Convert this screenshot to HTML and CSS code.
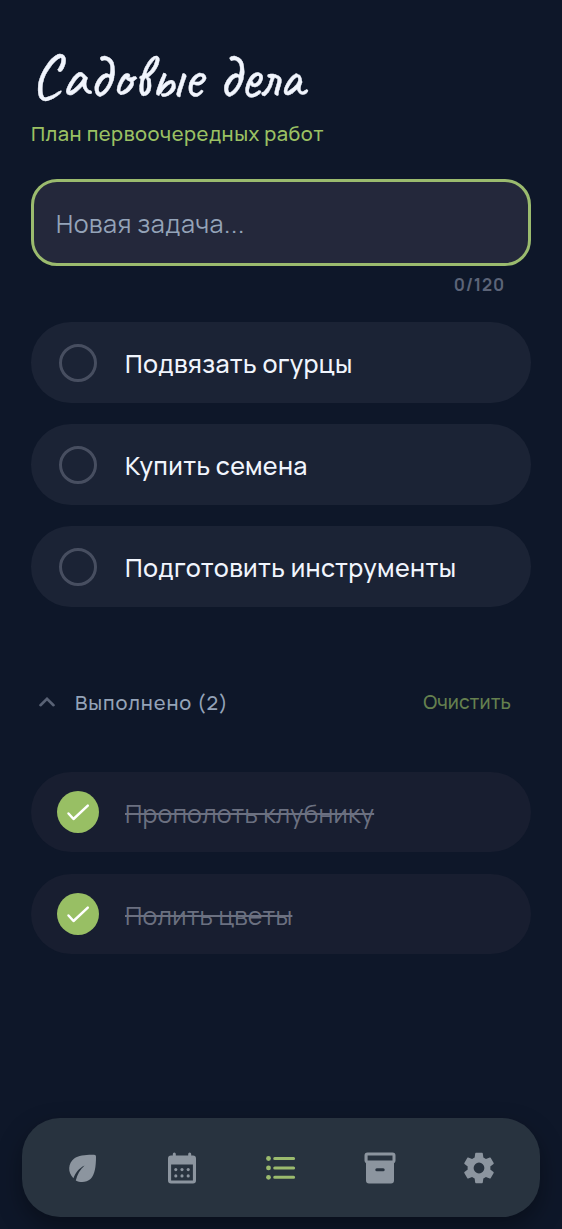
FILE: index.html
```html
<!DOCTYPE html>
<html lang="ru">
<head>
<meta charset="utf-8">
<meta name="viewport" content="width=device-width, initial-scale=1">
<title>Садовые дела</title>
<link rel="stylesheet" href="styles.css">
</head>
<body>
<div class="app">
  <main class="content">
    <h1 class="title">Садовые дела</h1>
    <p class="subtitle">План первоочередных работ</p>
    <div class="field"><span class="placeholder">Новая задача...</span></div>
    <div class="counter">0/120</div>
    <ul class="tasks">
      <li class="task"><span class="check"></span><span class="label">Подвязать огурцы</span></li>
      <li class="task"><span class="check"></span><span class="label">Купить семена</span></li>
      <li class="task"><span class="check"></span><span class="label">Подготовить инструменты</span></li>
    </ul>
    <div class="section">
      <svg class="chevron" viewBox="0 0 16 10"><path d="M1.500 8.200 8 1.800l6.500 6.400"/></svg>
      <span class="section-title">Выполнено (2)</span>
      <span class="clear">Очистить</span>
    </div>
    <ul class="tasks done">
      <li class="task"><span class="check checked"><svg viewBox="0 0 42 42"><path d="m11.500 22.500 5 5.500 14.300-13.300"/></svg></span><span class="label">Прополоть клубнику</span></li>
      <li class="task"><span class="check checked"><svg viewBox="0 0 42 42"><path d="m11.500 22.500 5 5.500 14.300-13.300"/></svg></span><span class="label">Полить цветы</span></li>
    </ul>
  </main>
  <nav class="nav">
    <span class="tab"><svg viewBox="0 0 38 38"><path d="M30 5.800C23 5.600 14.500 6.200 10.200 9.600C4 14.400 3.400 23.500 9.400 29.200C11.600 23.500 14.800 19.200 20.600 16.400C16 20.500 13.200 25.500 11.800 31.400C16.500 33.800 22.500 33.400 26.500 30C31 26 32 16.500 32 8C32 6.500 31.500 5.800 30 5.800Z"/></svg></span>
    <span class="tab"><svg viewBox="0 0 38 38"><path fill-rule="evenodd" d="M9.800 4.900a1.500 1.500 0 0 1 3 0V6.500h12.400V4.900a1.500 1.500 0 0 1 3 0V6.500H30a3 3 0 0 1 3 3v22a3 3 0 0 1-3 3H8a3 3 0 0 1-3-3v-22a3 3 0 0 1 3-3h1.800zM8.100 15.500v15.900h21.800V15.500z"/><g><circle cx="12.800" cy="20.600" r="1.550"/><circle cx="19" cy="20.600" r="1.550"/><circle cx="25.200" cy="20.600" r="1.550"/><circle cx="12.800" cy="26.900" r="1.550"/><circle cx="19" cy="26.900" r="1.550"/><circle cx="25.200" cy="26.900" r="1.550"/></g></svg></span>
    <span class="tab active"><svg viewBox="0 0 38 38"><g><circle cx="6.500" cy="9.500" r="2.400"/><circle cx="6.500" cy="18.900" r="2.400"/><circle cx="6.500" cy="28.300" r="2.400"/></g><path class="lines" d="M12.700 9.500h18.900M12.700 18.900h18.900M12.700 28.300h18.900"/></svg></span>
    <span class="tab"><svg viewBox="0 0 38 38"><path fill-rule="evenodd" d="M6.500 3.500h25a3 3 0 0 1 3 3v5c0 1.200-.6 2.200-1.500 2.700v17.300a3 3 0 0 1-3 3H8a3 3 0 0 1-3-3V14.200a3.100 3.100 0 0 1-1.500-2.700v-5a3 3 0 0 1 3-3zM6.600 6.600v4.900h24.900V6.600zM15.800 19.300a1.500 1.500 0 0 0 0 3h6.400a1.500 1.500 0 0 0 0-3z"/></svg></span>
    <span class="tab"><svg viewBox="0 0 24 24"><path d="M19.140 12.940c.04-.3.060-.61.060-.94 0-.32-.02-.64-.07-.94l2.030-1.580a.49.49 0 0 0 .12-.61l-1.920-3.320a.488.488 0 0 0-.59-.22l-2.390.96c-.5-.38-1.030-.7-1.620-.94l-.36-2.540a.484.484 0 0 0-.48-.41h-3.840c-.24 0-.43.17-.47.41l-.36 2.540c-.59.24-1.130.57-1.620.94l-2.390-.96c-.22-.08-.47 0-.59.22L2.740 8.870c-.12.210-.08.47.12.61l2.030 1.580c-.05.3-.09.63-.09.94s.02.640.07.940l-2.030 1.580a.49.49 0 0 0-.12.61l1.920 3.320c.12.220.37.290.59.220l2.390-.96c.5.380 1.030.7 1.620.940l.36 2.540c.05.240.24.410.48.410h3.840c.24 0 .44-.17.470-.410l.36-2.540c.59-.24 1.130-.56 1.620-.940l2.390.96c.22.080.47 0 .59-.220l1.920-3.320c.12-.22.070-.47-.12-.61zM12 15.400a3.400 3.400 0 1 1 0-6.800 3.400 3.400 0 0 1 0 6.800z"/></svg></span>
  </nav>
</div>
</body>
</html>
```
FILE: styles.css
```css
* { box-sizing: border-box; }
body { margin: 0; background: #0e1729; font-family: Manrope, Inter, "Noto Sans", sans-serif; color: #f1f5fd; }
.app { height: 1229px; display: flex; flex-direction: column; justify-content: space-between; padding: 38px 22px 12px; overflow: hidden; }
.content { padding: 0 9px; }
.title { margin: 0; height: 79px; line-height: 78px; font-family: Caveat, "Liberation Serif", serif; font-size: 62px; font-weight: 500; -webkit-text-stroke: 0.4px #f1f5fd; white-space: nowrap; }
.subtitle { margin: 0; height: 32px; line-height: 33px; font-size: 20px; font-weight: 500; letter-spacing: 0.52px; color: #9bc163; white-space: nowrap; }
.field { margin-top: 30px; height: 87px; border: 3px solid #9bbb6e; border-radius: 26px; background: #24283b; padding: 2px 0 0 22px; display: flex; align-items: center; font-size: 25px; letter-spacing: 0.6px; color: #94a3b8; white-space: nowrap; }
.counter { height: 36px; line-height: 37px; padding-right: 26px; text-align: right; font-size: 17px; font-weight: 700; color: #5c6478; letter-spacing: 0.8px; }
.tasks { list-style: none; margin: 20px 0 0; padding: 0; display: flex; flex-direction: column; gap: 21px; }
.task { height: 81px; border-radius: 40px; background: #1b2335; display: flex; align-items: center; padding-left: 28px; gap: 28px; font-size: 25px; font-weight: 500; letter-spacing: 0.36px; white-space: nowrap; }
.label { padding-top: 1px; }
.check { width: 38px; height: 38px; border: 3px solid #474e60; border-radius: 50%; flex: none; }
.section { height: 40px; margin-top: 75px; padding: 0 20px 0 8px; display: flex; align-items: center; font-size: 20px; font-weight: 500; }
.chevron { width: 16px; height: 10px; margin-right: 20px; fill: none; stroke: #596275; stroke-width: 2.600; stroke-linecap: round; }
.section-title { color: #94a3b8; letter-spacing: 0.85px; }
.clear { margin: 0 0 1px auto; color: #65804f; font-size: 19px; letter-spacing: 0.1px; }
.done { margin-top: 50px; gap: 22px; }
.done .task { height: 80px; background: #181e30; color: #6b7080; padding-left: 26px; gap: 26px; font-weight: 400; letter-spacing: 0.25px; }
.done .label { padding-top: 2px; text-decoration: line-through; text-decoration-thickness: 2px; }
.checked { width: 42px; height: 42px; border: 0; background: #98bf64; }
.checked svg { display: block; fill: none; stroke: #fff; stroke-width: 2.500; stroke-linecap: round; stroke-linejoin: round; }
.nav { height: 99px; border-radius: 38px; background: #28333f; box-shadow: 0 10px 24px rgba(0, 0, 0, 0.35); display: flex; align-items: center; padding: 0 11px; }
.tab { flex: 1; display: flex; justify-content: center; }
.tab svg { width: 38px; height: 38px; fill: #8c959f; }
.active svg { fill: #9bbb6e; }
.lines { stroke: #9bbb6e; stroke-width: 3; stroke-linecap: round; }
```
